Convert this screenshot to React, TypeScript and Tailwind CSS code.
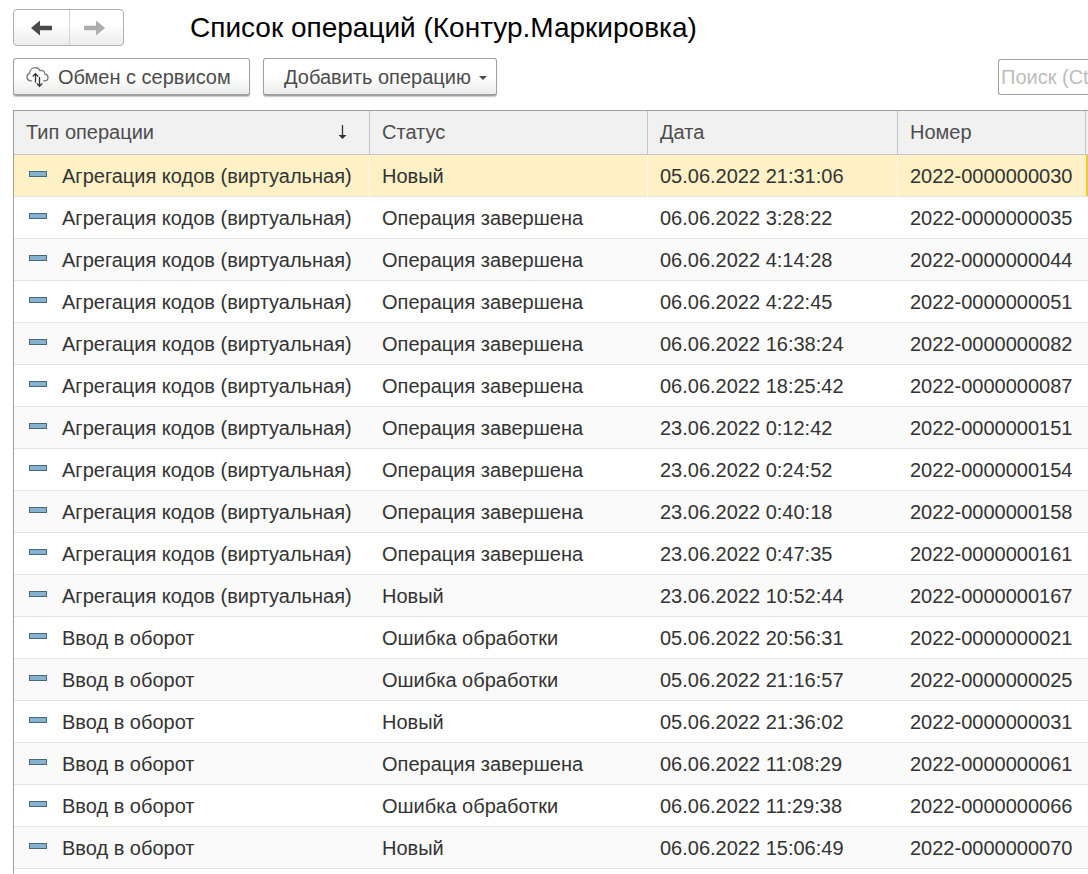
import { useState } from "react";

interface Operation {
    type: string;
    status: string;
    date: string;
    number: string;
}

const AGGREGATION = "Агрегация кодов (виртуальная)";
const RELEASE = "Ввод в оборот";

const STATUS_NEW = "Новый";
const STATUS_DONE = "Операция завершена";
const STATUS_ERROR = "Ошибка обработки";

const OPERATIONS: Operation[] = [
    { type: AGGREGATION, status: STATUS_NEW, date: "05.06.2022 21:31:06", number: "2022-0000000030" },
    { type: AGGREGATION, status: STATUS_DONE, date: "06.06.2022 3:28:22", number: "2022-0000000035" },
    { type: AGGREGATION, status: STATUS_DONE, date: "06.06.2022 4:14:28", number: "2022-0000000044" },
    { type: AGGREGATION, status: STATUS_DONE, date: "06.06.2022 4:22:45", number: "2022-0000000051" },
    { type: AGGREGATION, status: STATUS_DONE, date: "06.06.2022 16:38:24", number: "2022-0000000082" },
    { type: AGGREGATION, status: STATUS_DONE, date: "06.06.2022 18:25:42", number: "2022-0000000087" },
    { type: AGGREGATION, status: STATUS_DONE, date: "23.06.2022 0:12:42", number: "2022-0000000151" },
    { type: AGGREGATION, status: STATUS_DONE, date: "23.06.2022 0:24:52", number: "2022-0000000154" },
    { type: AGGREGATION, status: STATUS_DONE, date: "23.06.2022 0:40:18", number: "2022-0000000158" },
    { type: AGGREGATION, status: STATUS_DONE, date: "23.06.2022 0:47:35", number: "2022-0000000161" },
    { type: AGGREGATION, status: STATUS_NEW, date: "23.06.2022 10:52:44", number: "2022-0000000167" },
    { type: RELEASE, status: STATUS_ERROR, date: "05.06.2022 20:56:31", number: "2022-0000000021" },
    { type: RELEASE, status: STATUS_ERROR, date: "05.06.2022 21:16:57", number: "2022-0000000025" },
    { type: RELEASE, status: STATUS_NEW, date: "05.06.2022 21:36:02", number: "2022-0000000031" },
    { type: RELEASE, status: STATUS_DONE, date: "06.06.2022 11:08:29", number: "2022-0000000061" },
    { type: RELEASE, status: STATUS_ERROR, date: "06.06.2022 11:29:38", number: "2022-0000000066" },
    { type: RELEASE, status: STATUS_NEW, date: "06.06.2022 15:06:49", number: "2022-0000000070" },
];

function ArrowIcon({ className }: { className: string }) {
    return (
        <svg width="21" height="16" viewBox="0 0 21 16" className={className} fill="currentColor" aria-hidden="true">
            <path d="M0 8 9 0.5V5.8H21V10.2H9V15.5Z" />
        </svg>
    );
}

function CloudSyncIcon() {
    return (
        <svg width="24" height="22" viewBox="0 0 24 22" fill="none" aria-hidden="true">
            <path
                d="M6.5 14.8H5A4 4 0 0 1 4.6 7.2C4.8 3.8 7.2 1.6 10.2 1.6C12.4 1.6 14.2 2.7 15 4.6C17.6 3.8 19.8 5.4 19.8 7.9C21.8 8.4 23 9.6 23 11.4C23 13.3 21.4 14.7 19.5 14.8H18.5"
                stroke="#777"
                strokeWidth="1.3"
                strokeLinecap="round"
            />
            <path d="M10.5 16.5V8M7.7 10.5 10.5 7.6 13.3 10.5M14.5 11V20M11.7 17.4 14.5 20.3 17.3 17.4" stroke="#333" strokeWidth="1.3" />
        </svg>
    );
}

const toolbarButton =
    "flex h-[38px] items-center rounded-[3px] border border-b-2 border-[#a0a0a0] bg-linear-to-b from-white from-50% to-[#ebebeb] text-xl text-[#4b4b4b] shadow-[0_1px_1px_#c8c8c8]";

function OperationsTable() {
    const [selected, setSelected] = useState(OPERATIONS[0].number);

    return (
        <table className="w-full table-fixed border-separate border-spacing-0 text-left text-xl whitespace-nowrap text-[#333]">
            <colgroup>
                <col className="w-[356px]" />
                <col className="w-[278px]" />
                <col className="w-[250px]" />
                <col className="w-[188px]" />
                <col />
            </colgroup>
            <thead className="text-[#4d4d4d]">
                <tr className="h-11 bg-[#f1f1f1] *:border-b *:border-[#c4c4c4] *:pb-0.5 *:font-normal">
                    <th scope="col" className="border-r px-3" aria-sort="ascending">
                        <div className="flex items-center justify-between">
                            Тип операции
                            <svg width="9" height="16" viewBox="0 0 9 16" className="mr-2.5" aria-hidden="true">
                                <path d="M4.5 1V12" stroke="#333" strokeWidth="1.3" />
                                <path d="M0.5 11H8.5L4.5 15Z" fill="#333" />
                            </svg>
                        </div>
                    </th>
                    <th scope="col" className="border-r px-3">Статус</th>
                    <th scope="col" className="border-r px-3">Дата</th>
                    <th scope="col" className="border-r px-3">Номер</th>
                    <td />
                </tr>
            </thead>
            <tbody>
                {OPERATIONS.map((op) => {
                    const isSelected = op.number === selected;
                    return (
                        <tr
                            key={op.number}
                            onClick={() => setSelected(op.number)}
                            aria-selected={isSelected}
                            className={
                                isSelected
                                    ? "h-[42px] bg-[#fdf1c5] *:border-b *:border-b-[#e4e4e4]"
                                    : "h-[42px] odd:bg-[#fafafa] *:border-b *:border-b-[#e4e4e4]"
                            }
                        >
                            <td className={isSelected ? "border-r border-r-[#fffaea] pl-[15px]" : "pl-[15px]"}>
                                <div className="flex items-center gap-[15px]">
                                    <span className="mb-1 h-1.5 w-[18px] border border-[#44697c] bg-[#86b1cf]" />
                                    {op.type}
                                </div>
                            </td>
                            <td className={isSelected ? "border-r border-r-[#fffaea] px-3" : "px-3"}>{op.status}</td>
                            <td className={isSelected ? "border-r border-r-[#fffaea] px-3" : "px-3"}>{op.date}</td>
                            <td className="px-3">{op.number}</td>
                            <td className={isSelected ? "bg-[#ebcb3e]" : ""} />
                        </tr>
                    );
                })}
            </tbody>
        </table>
    );
}

export default function App() {
    return (
        <main className="flex min-h-screen flex-col bg-white pt-[9px] pl-[13px] font-['Liberation_Sans',Arial,sans-serif]">
            <header className="flex items-center">
                <div className="flex h-[37px] w-[111px] rounded-[4px] border border-[#b0b0b0] bg-linear-to-b from-white from-40% to-[#ececec]">
                    <button type="button" aria-label="Назад" className="flex w-14 items-center justify-center border-r border-[#d4d4d4]">
                        <ArrowIcon className="text-[#4a4a4a]" />
                    </button>
                    <button type="button" aria-label="Вперёд" disabled className="flex flex-1 items-center justify-center pr-1">
                        <ArrowIcon className="rotate-180 text-[#adadad]" />
                    </button>
                </div>
                <h1 className="ml-[66px] text-[28px] leading-9 text-black">Список операций (Контур.Маркировка)</h1>
            </header>

            <div className="mt-3 flex items-center gap-[13px]">
                <button type="button" className={`${toolbarButton} w-[237px] gap-[9px] pl-[11px]`}>
                    <CloudSyncIcon />
                    Обмен с сервисом
                </button>
                <button type="button" aria-haspopup="menu" className={`${toolbarButton} w-[234px] gap-2 pl-5`}>
                    Добавить операцию
                    <svg width="8" height="4" viewBox="0 0 8 4" className="mt-0.5" aria-hidden="true">
                        <path d="M0 0H8L4 4Z" fill="#4b4b4b" />
                    </svg>
                </button>
                <input
                    type="text"
                    aria-label="Поиск"
                    placeholder="Поиск (Ctrl+F)"
                    className="ml-auto h-9 w-[90px] rounded-l-[3px] border border-r-0 border-[#a0a0a0] bg-white pl-0.5 text-xl placeholder:text-[#bdbdbd]"
                />
            </div>

            <section className="mt-[14px] grow border-t border-l border-[#a0a0a0]">
                <OperationsTable />
            </section>
        </main>
    );
}
